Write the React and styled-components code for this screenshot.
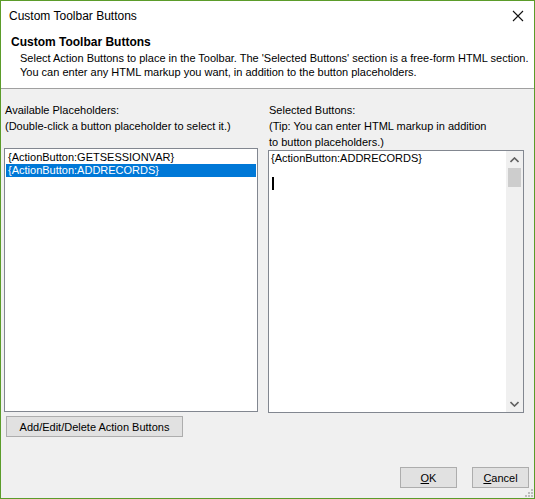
import React from 'react';
import styled, { createGlobalStyle } from 'styled-components';

const GlobalStyle = createGlobalStyle`
    html, body {
        margin: 0;
        padding: 0;
        background: #f0f0f0;
    }
    * {
        box-sizing: border-box;
    }
`;

const Window = styled.div`
    width: 535px;
    height: 499px;
    border: 1px solid #5b9c2a;
    display: flex;
    flex-direction: column;
    font-family: "Liberation Sans", Arial, sans-serif;
    font-size: 11px;
    color: #000;
    background: #f0f0f0;
    overflow: hidden;
`;

const TitleBar = styled.div`
    height: 30px;
    flex: none;
    background: #fff;
    display: flex;
    align-items: center;
    justify-content: space-between;
    padding: 0 10px 0 8px;
    font-size: 12px;
`;

const CloseIcon = () => (
    <svg width="12" height="12" viewBox="0 0 12 12">
        <path d="M1 1 L11 11 M11 1 L1 11" stroke="#111" strokeWidth="1.1" />
    </svg>
);

const Header = styled.div`
    flex: none;
    background: #fff;
    border-bottom: 1px solid #a0a0a0;
    padding: 4px 8px 0 10px;
    height: 58px;
    white-space: nowrap;
`;

const HeaderTitle = styled.div`
    font-weight: bold;
    font-size: 12px;
    line-height: 15px;
    margin-bottom: 1px;
`;

const HeaderText = styled.div`
    padding-left: 9px;
    line-height: 14px;
`;

const Body = styled.div`
    flex: 1;
    display: flex;
    flex-direction: column;
    padding: 13px 5px 10px 3px;
`;

const Columns = styled.div`
    display: grid;
    grid-template-columns: 254px 256px;
    column-gap: 10px;
`;

const Column = styled.div`
    display: flex;
    flex-direction: column;
`;

const Label = styled.div`
    line-height: 16px;
    height: ${props => props.h}px;
    padding-left: 1px;
    white-space: nowrap;
`;

const ListBox = styled.div`
    height: 264px;
    background: #fff;
    border: 1px solid #828790;
    padding: 2px 1px;
`;

const ListItem = styled.div`
    line-height: 13px;
    height: 13px;
    padding-left: 2px;
    white-space: nowrap;
    background: ${props => (props.selected ? '#0078d7' : 'transparent')};
    color: ${props => (props.selected ? '#fff' : '#000')};
`;

const TextArea = styled.div`
    height: 263px;
    background: #fff;
    border: 1px solid #828790;
    display: flex;
`;

const TextContent = styled.div`
    flex: 1;
    padding: 1px 2px;
    line-height: 13px;
`;

const Caret = styled.div`
    width: 2px;
    height: 13px;
    background: #000;
    margin-top: 12px;
    margin-left: 1px;
`;

const ScrollBar = styled.div`
    width: 17px;
    background: #f0f0f0;
    display: flex;
    flex-direction: column;
`;

const ScrollArrow = styled.div`
    height: 17px;
    display: flex;
    align-items: center;
    justify-content: center;
`;

const ScrollTrack = styled.div`
    flex: 1;
    padding: 0 2px;
`;

const ScrollThumb = styled.div`
    height: 19px;
    background: #cdcdcd;
`;

const Arrow = ({ up }) => (
    <svg width="9" height="6" viewBox="0 0 9 6">
        <path
            d={up ? 'M0.5 5 L4.5 1 L8.5 5' : 'M0.5 1 L4.5 5 L8.5 1'}
            stroke="#606060"
            strokeWidth="1.6"
            fill="none"
        />
    </svg>
);

const Button = styled.button`
    font-family: inherit;
    font-size: 11px;
    color: #000;
    background: #e1e1e1;
    border: 1px solid #adadad;
    height: 21px;
    width: ${props => props.w}px;
    padding: 0;
    margin: 0;
`;

const ActionRow = styled.div`
    padding: 3px 0 0 2px;
`;

const Footer = styled.div`
    margin-top: auto;
    display: flex;
    justify-content: flex-end;
    gap: 15px;
    position: relative;
`;

const Grip = styled.svg`
    position: absolute;
    right: -4px;
    bottom: -9px;
`;

const App = () => (
    <>
        <GlobalStyle />
        <Window>
            <TitleBar>
                <span>Custom Toolbar Buttons</span>
                <CloseIcon />
            </TitleBar>
            <Header>
                <HeaderTitle>Custom Toolbar Buttons</HeaderTitle>
                <HeaderText>
                    Select Action Buttons to place in the Toolbar. The 'Selected Buttons' section is a free-form HTML section.
                    <br />
                    You can enter any HTML markup you want, in addition to the button placeholders.
                </HeaderText>
            </Header>
            <Body>
                <Columns>
                    <Column>
                        <Label h={46}>
                            Available Placeholders:
                            <br />
                            (Double-click a button placeholder to select it.)
                        </Label>
                        <ListBox>
                            <ListItem>{'{ActionButton:GETSESSIONVAR}'}</ListItem>
                            <ListItem selected>{'{ActionButton:ADDRECORDS}'}</ListItem>
                        </ListBox>
                    </Column>
                    <Column>
                        <Label h={48}>
                            Selected Buttons:
                            <br />
                            (Tip: You can enter HTML markup in addition
                            <br />
                            to button placeholders.)
                        </Label>
                        <TextArea>
                            <TextContent>
                                {'{ActionButton:ADDRECORDS}'}
                                <Caret />
                            </TextContent>
                            <ScrollBar>
                                <ScrollArrow>
                                    <Arrow up />
                                </ScrollArrow>
                                <ScrollTrack>
                                    <ScrollThumb />
                                </ScrollTrack>
                                <ScrollArrow>
                                    <Arrow />
                                </ScrollArrow>
                            </ScrollBar>
                        </TextArea>
                    </Column>
                </Columns>
                <ActionRow>
                    <Button w={177}>Add/Edit/Delete Action Buttons</Button>
                </ActionRow>
                <Footer>
                    <Button w={57}>
                        <u>O</u>K
                    </Button>
                    <Button w={57}>
                        <u>C</u>ancel
                    </Button>
                    <Grip width="8" height="8" viewBox="0 0 8 8">
                        <rect x="6" y="0" width="2" height="2" fill="#bcbcbc" />
                        <rect x="3" y="3" width="2" height="2" fill="#bcbcbc" />
                        <rect x="6" y="3" width="2" height="2" fill="#bcbcbc" />
                        <rect x="0" y="6" width="2" height="2" fill="#bcbcbc" />
                        <rect x="3" y="6" width="2" height="2" fill="#bcbcbc" />
                        <rect x="6" y="6" width="2" height="2" fill="#bcbcbc" />
                    </Grip>
                </Footer>
            </Body>
        </Window>
    </>
);

export default App;
